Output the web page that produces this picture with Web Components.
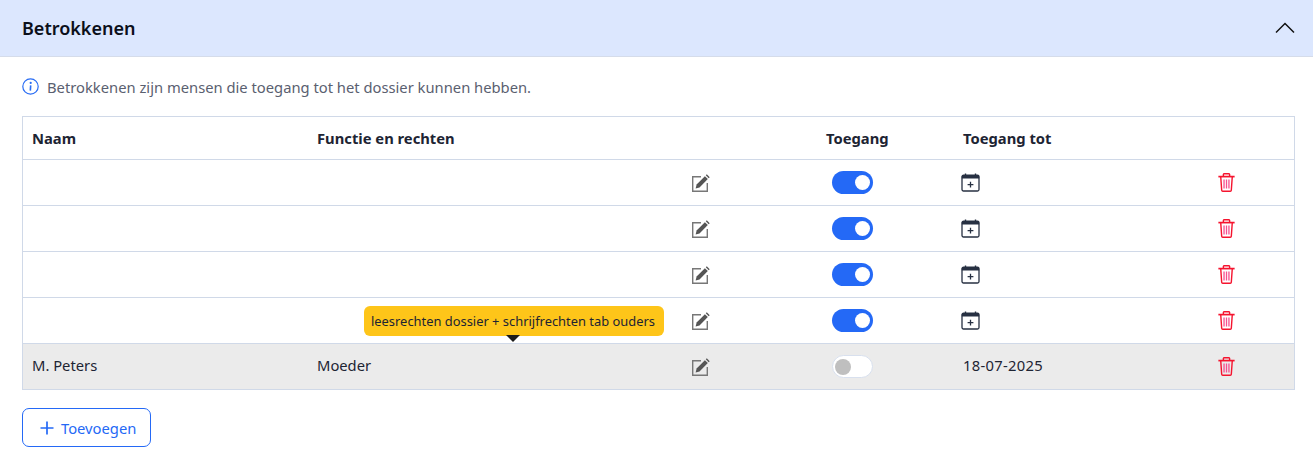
<!DOCTYPE html>
<html lang="nl">
<head>
<meta charset="utf-8">
<title>Betrokkenen</title>
<style>
  html, body { margin: 0; padding: 0; background: #fff; }
  body { font-family: "Noto Sans", "Open Sans", sans-serif; color: #1d2433; }
</style>
</head>
<body>

<template id="panel-tpl">
  <style>
    :host { display: block; }
    .head {
      height: 56px;
      background: #dce7fe;
      border-bottom: 1px solid #d5dcea;
      display: flex;
      align-items: center;
      justify-content: space-between;
      padding: 0 18px 0 22px;
    }
    h2 { margin: 0; font-size: 18px; font-weight: 600; color: #0b0f1a; }
    svg { display: block; }
    .body { padding: 19px 18px 0 22px; }
  </style>
  <div class="head">
    <h2><slot name="title"></slot></h2>
    <svg width="20" height="12" viewBox="0 0 20 12" fill="none" stroke="#111" stroke-width="1.5"><path d="M1 10.5 10 1.5 19 10.5"/></svg>
  </div>
  <div class="body"><slot></slot></div>
</template>

<template id="info-tpl">
  <style>
    :host { display: flex; align-items: center; gap: 8px; height: 21px; font-size: 14.75px; color: #5a6070; margin-bottom: 19px; }
    svg { display: block; flex: none; }
  </style>
  <svg width="17" height="17" viewBox="0 0 17 17" fill="none">
    <circle cx="8.5" cy="8.5" r="7.7" stroke="#2a6df4" stroke-width="1.2"/>
    <circle cx="8.7" cy="4.9" r="1.1" fill="#2a6df4"/>
    <path d="M8.7 7.4l-.4 5.2" stroke="#2a6df4" stroke-width="1.6"/>
  </svg>
  <span><slot></slot></span>
</template>

<template id="table-tpl">
  <style>
    :host { display: block; position: relative; border: 1px solid #d0d9e8; border-bottom: 0; }
  </style>
  <slot></slot>
</template>

<template id="row-tpl">
  <style>
    :host {
      display: grid;
      grid-template-columns: 284px 374px 135px 137px 255px 87px;
      height: 45px;
      align-items: center;
      border-bottom: 1px solid #d0d9e8;
      font-size: 14.75px;
      color: #1d2433;
    }
    :host([head]) { height: 42px; font-weight: 700; }
    :host([muted]) { background: #ebebeb; }
    ::slotted(*) { padding-left: 10px; min-width: 0; }
    ::slotted(:first-child) { padding-left: 9px; }
    ::slotted(.val) { position: relative; top: -2px; }
    ::slotted(.date) { letter-spacing: .3px; }
  </style>
  <slot></slot>
</template>

<template id="edit-tpl">
  <style>
    :host { display: flex; align-items: center; padding-top: 1px; }
    svg { display: block; }
  </style>
  <svg width="19" height="19" viewBox="0 0 19 19" fill="none">
    <path d="M10 2.7H1.7v14.6h14.6V9" stroke="#777" stroke-width="1.4"/>
    <path d="M4.6 14.4l1-3.9L13.9 2.2l2.9 2.9-8.3 8.3z" fill="#555"/>
    <path d="M14.8 1.3l1-1 2.9 2.9-1 1z" fill="#555"/>
  </svg>
</template>

<template id="switch-tpl">
  <style>
    :host { display: flex; padding-left: 16px !important; }
    .track {
      width: 41px; height: 23px; box-sizing: border-box;
      border-radius: 12px;
      background: #2469f6;
      display: flex; align-items: center; justify-content: flex-end;
      padding: 0 3px;
    }
    .knob { width: 15px; height: 15px; border-radius: 50%; background: #fff; }
    :host([off]) .track { background: #fff; border: 1px solid #d8e0ee; justify-content: flex-start; padding: 0 2px; }
    :host([off]) .knob { width: 16px; height: 16px; background: #bfbfbf; }
  </style>
  <div class="track"><div class="knob"></div></div>
</template>

<template id="cal-tpl">
  <style>
    :host { display: flex; margin-left: -2px; }
    svg { display: block; }
  </style>
  <svg width="19" height="19" viewBox="0 0 19 19" fill="none">
    <path d="M4.5.4v3M14.5.4v3" stroke="#273042" stroke-width="1.4"/>
    <path d="M.8 5.6V3.4a1.5 1.5 0 0 1 1.5-1.5h14.4a1.5 1.5 0 0 1 1.5 1.5v2.2z" fill="#273042"/>
    <rect x="1" y="2.2" width="17" height="15.8" rx="1.5" stroke="#273042" stroke-width="1.3"/>
    <path d="M9.5 8.8v5.8M6.6 11.7h5.8" stroke="#273042" stroke-width="1.3"/>
  </svg>
</template>

<template id="trash-tpl">
  <style>
    :host { display: flex; }
    svg { display: block; }
  </style>
  <svg width="17" height="19" viewBox="0 0 18 19" preserveAspectRatio="none" fill="none" stroke="#f5142f" stroke-width="1.5">
    <path d="M.4 3.6h17.2" stroke-width="1.7"/>
    <path d="M5.7 3.4V1.6a.9.9 0 0 1 .9-.9h4.8a.9.9 0 0 1 .9.9v1.8"/>
    <path d="M2.9 3.8l1 13.4a1.1 1.1 0 0 0 1.1 1h8a1.1 1.1 0 0 0 1.1-1l1-13.4"/>
    <path d="M6.4 6.4v9.2M9 6.4v9.2M11.6 6.4v9.2" stroke="#f7508f" stroke-width="1.4"/>
  </svg>
</template>

<template id="tip-tpl">
  <style>
    :host {
      position: absolute;
      left: 341px;
      top: 189px;
      display: block;
      width: 300px;
      height: 30px;
      box-sizing: border-box;
      padding: 0 0 0 7px;
      line-height: 30px;
      white-space: nowrap;
      background: #fec519;
      border-radius: 6px;
      font-size: 12.9px;
      color: #1d2433;
    }
    :host::after {
      content: "";
      position: absolute;
      left: 142px;
      top: 29px;
      border: 7px solid transparent;
      border-top-color: #1c1c1c;
      border-bottom: 0;
    }
  </style>
  <slot></slot>
</template>

<template id="button-tpl">
  <style>
    :host { display: inline-block; margin-top: 18px; }
    button {
      display: flex; align-items: center; gap: 7px;
      width: 129px; height: 39px;
      box-sizing: border-box;
      padding: 0 0 0 17px;
      background: #fff;
      border: 1px solid #2469f6;
      border-radius: 7px;
      color: #2469f6;
      font: 14.75px "Noto Sans", "Open Sans", sans-serif;
    }
    svg { display: block; flex: none; }
  </style>
  <button>
    <svg width="14" height="14" viewBox="0 0 14 14" stroke="#2469f6" stroke-width="1.7"><path d="M7 .5v13M.5 7h13"/></svg>
    <span><slot></slot></span>
  </button>
</template>

<b-panel>
  <span slot="title">Betrokkenen</span>
  <b-info>Betrokkenen zijn mensen die toegang tot het dossier kunnen hebben.</b-info>
  <b-table>
    <b-row head><span>Naam</span><span>Functie en rechten</span><span></span><span>Toegang</span><span>Toegang tot</span><span></span></b-row>
    <b-row><span></span><span></span><b-edit></b-edit><b-switch></b-switch><b-cal></b-cal><b-trash></b-trash></b-row>
    <b-row><span></span><span></span><b-edit></b-edit><b-switch></b-switch><b-cal></b-cal><b-trash></b-trash></b-row>
    <b-row><span></span><span></span><b-edit></b-edit><b-switch></b-switch><b-cal></b-cal><b-trash></b-trash></b-row>
    <b-row><span></span><span></span><b-edit></b-edit><b-switch></b-switch><b-cal></b-cal><b-trash></b-trash></b-row>
    <b-row muted><span class="val">M. Peters</span><span class="val">Moeder</span><b-edit></b-edit><b-switch off></b-switch><span class="val date">18-07-2025</span><b-trash></b-trash></b-row>
    <b-tip>leesrechten dossier + schrijfrechten tab ouders</b-tip>
  </b-table>
  <b-button>Toevoegen</b-button>
</b-panel>

<script>
  // every element is just a shadow root cloned from its template
  function define(name, tplId) {
    customElements.define(name, class extends HTMLElement {
      constructor() {
        super();
        const root = this.attachShadow({ mode: "open" });
        root.appendChild(document.getElementById(tplId).content.cloneNode(true));
      }
    });
  }

  define("b-panel", "panel-tpl");
  define("b-info", "info-tpl");
  define("b-table", "table-tpl");
  define("b-row", "row-tpl");
  define("b-edit", "edit-tpl");
  define("b-switch", "switch-tpl");
  define("b-cal", "cal-tpl");
  define("b-trash", "trash-tpl");
  define("b-tip", "tip-tpl");
  define("b-button", "button-tpl");
</script>
</body>
</html>
